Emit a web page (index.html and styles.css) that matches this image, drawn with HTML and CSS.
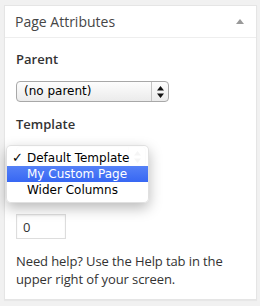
FILE: index.html
```html
<!DOCTYPE html>
<html lang="en">
<head>
    <meta charset="UTF-8">
    <title>Page Attributes</title>
    <link rel="stylesheet" href="styles.css">
</head>
<body>
    <div class="postbox">
        <div class="hndle">
            <h3>Page Attributes</h3>
            <span class="toggle"></span>
        </div>
        <div class="inside">
            <p class="label">Parent</p>
            <div class="select parent-select">
                <span class="select-text">(no parent)</span>
                <span class="select-arrows">
                    <svg width="7" height="12" viewBox="0 0 7 12"><path d="M3.5 0 L7 4.5 H0 Z M3.5 12 L7 7.5 H0 Z" fill="#111"/></svg>
                </span>
            </div>

            <p class="label">Template</p>
            <div class="template-wrap">
                <!-- the open popup sits over the template select -->
                <div class="select template-select">
                    <span class="select-text"></span>
                    <span class="select-arrows">
                        <svg width="7" height="12" viewBox="0 0 7 12"><path d="M3.5 0 L7 4.5 H0 Z M3.5 12 L7 7.5 H0 Z" fill="#111"/></svg>
                    </span>
                </div>
                <ul class="menu">
                    <li class="checked"><span class="check">✓</span>Default Template</li>
                    <li class="active">My Custom Page</li>
                    <li>Wider Columns</li>
                </ul>
            </div>

            <p class="label label-order">Order</p>
            <input class="order" type="text" value="0">

            <p class="help">Need help? Use the Help tab in the upper right of your screen.</p>
        </div>
    </div>
</body>
</html>
```

FILE: styles.css
```css
body {
    margin: 0;
    padding: 5px 3px 6px 4px;
    background: #f1f1f1;
    font-family: 'Open Sans', 'Liberation Sans', sans-serif;
    color: #444;
}

.postbox {
    background: #fff;
    border: 1px solid #e5e5e5;
    box-shadow: 0 1px 1px rgba(0,0,0,0.04);
}

.hndle {
    display: flex;
    align-items: center;
    justify-content: space-between;
    height: 31px;
    padding: 0 12px 0 10px;
    border-bottom: 1px solid #eee;
}

.hndle h3 {
    margin: 0;
    font-size: 14px;
    font-weight: 400;
    color: #464646;
}

.toggle {
    width: 0;
    height: 0;
    border-left: 4px solid transparent;
    border-right: 4px solid transparent;
    border-bottom: 5px solid #999;
}

.inside {
    padding: 12px 11px 11px 11px;
}

.label {
    margin: 0 0 13px;
    font-size: 13px;
    font-weight: 600;
    line-height: 18px;
    color: #333;
}

/* hidden behind the open popup */
.label-order {
    margin-bottom: 16px;
    visibility: hidden;
}

.select {
    display: flex;
    width: 151px;
    height: 19px;
    border: 1px solid #a8a8a8;
    border-radius: 4px;
    background: linear-gradient(#fdfdfd, #ebebeb);
    font-family: 'DejaVu Sans', 'Liberation Sans', sans-serif;
    font-size: 12px;
    color: #000;
    margin-bottom: 13px;
}

.template-select {
    width: 128px;
}

.select-text {
    flex: 1;
    padding-left: 7px;
    line-height: 19px;
    white-space: nowrap;
    overflow: hidden;
}

.select-arrows {
    display: flex;
    align-items: center;
    justify-content: center;
    width: 16px;
    border-left: 1px solid #c4c4c4;
}

.template-wrap {
    position: relative;
}

.menu {
    position: absolute;
    left: -10px;
    top: -1px;
    width: 141px;
    margin: 0;
    padding: 4px 0;
    list-style: none;
    background: rgba(255,255,255,0.96);
    border: 1px solid rgba(0,0,0,0.12);
    border-radius: 5px;
    box-shadow: 0 5px 14px rgba(0,0,0,0.28);
    font-family: 'DejaVu Sans', 'Liberation Sans', sans-serif;
    font-size: 12px;
    color: #000;
    z-index: 2;
}

.menu li {
    position: relative;
    height: 16px;
    line-height: 16px;
    padding-left: 20px;
}

.menu .check {
    position: absolute;
    left: 5px;
    font-size: 13px;
    font-weight: bold;
}

.menu li.active {
    background: linear-gradient(#5581f7, #3767f3);
    color: #fff;
}

.order {
    display: block;
    box-sizing: border-box;
    width: 50px;
    height: 25px;
    margin: 0 0 13px;
    padding: 0 6px;
    border: 1px solid #ddd;
    box-shadow: inset 0 1px 2px rgba(0,0,0,0.07);
    font-family: 'Open Sans', 'Liberation Sans', sans-serif;
    font-size: 13px;
    color: #333;
}

.help {
    margin: 0;
    font-size: 13px;
    line-height: 18px;
    letter-spacing: -0.1px;
    color: #333;
}
```
